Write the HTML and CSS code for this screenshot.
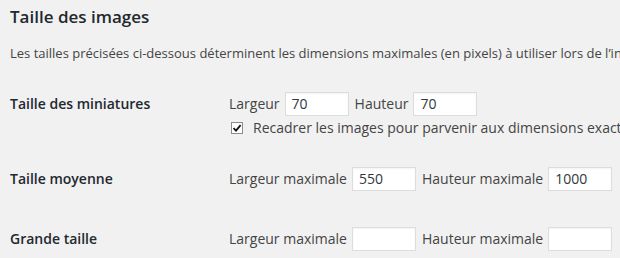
FILE: index.html
```html
<!DOCTYPE html>
<html lang="fr">
<head>
    <meta charset="UTF-8">
    <title>Réglages des médias</title>
    <link rel="stylesheet" href="styles.css">
</head>
<body>
    <div class="wrap">
        <h3 class="title">Taille des images</h3>
        <p class="desc">Les tailles précisées ci-dessous déterminent les dimensions maximales (en pixels) à utiliser lors de l’insertion d’une image dans la bibliothèque de médias.</p>

        <div class="row row-thumb">
            <div class="label">Taille des miniatures</div>
            <div class="field">
                <div class="line">
                    <span class="text">Largeur</span>
                    <input type="text" class="small" value="70">
                    <span class="text">Hauteur</span>
                    <input type="text" class="small" value="70">
                </div>
                <label class="check">
                    <span class="box">
                        <svg width="10" height="10" viewBox="0 0 10 10"><path d="M1.5 5.2 L4 7.6 L8.6 2.2" fill="none" stroke="#111" stroke-width="1.8"/></svg>
                    </span>
                    <span class="text">Recadrer les images pour parvenir aux dimensions exactes</span>
                </label>
            </div>
        </div>

        <div class="row">
            <div class="label">Taille moyenne</div>
            <div class="field">
                <div class="line">
                    <span class="text">Largeur maximale</span>
                    <input type="text" class="small" value="550">
                    <span class="text">Hauteur maximale</span>
                    <input type="text" class="small" value="1000">
                </div>
            </div>
        </div>

        <div class="row">
            <div class="label">Grande taille</div>
            <div class="field">
                <div class="line">
                    <span class="text">Largeur maximale</span>
                    <input type="text" class="small" value="">
                    <span class="text">Hauteur maximale</span>
                    <input type="text" class="small" value="">
                </div>
            </div>
        </div>
    </div>
</body>
</html>
```

FILE: styles.css
```css
body {
    margin: 0;
    background-color: #f1f1f1;
    font-family: "Open Sans", sans-serif;
    color: #444;
    overflow: hidden;
}
.wrap {
    padding: 0 0 0 10px;
    white-space: nowrap;
}
.title {
    font-size: 17px;
    font-weight: 600;
    line-height: 1.3;
    color: #23282d;
    margin: 6px 0 0;
}
.desc {
    font-size: 13px;
    line-height: 1.5;
    margin: 16px 0 0;
}
.row {
    display: flex;
    padding: 17px 0 19px;
}
.row-thumb {
    padding-top: 28px;
    padding-bottom: 14px;
}
.label {
    width: 219px;
    flex-shrink: 0;
    font-size: 14px;
    font-weight: 600;
    line-height: 24px;
    color: #23282d;
}
.line {
    display: flex;
    align-items: center;
    height: 24px;
}
.text {
    font-size: 14px;
    line-height: 24px;
    color: #444;
}
.small {
    box-sizing: border-box;
    width: 64px;
    height: 24px;
    margin: 0 6px 0 5px;
    padding: 0 6px;
    border: 1px solid #ddd;
    box-shadow: inset 0 1px 2px rgba(0, 0, 0, 0.05);
    background-color: #fff;
    font-family: "Open Sans", sans-serif;
    font-size: 14px;
    color: #32373c;
    outline: none;
}
.check {
    display: flex;
    align-items: center;
    margin-top: 3px;
    height: 17px;
}
.check .text {
    line-height: 17px;
}
.box {
    box-sizing: border-box;
    width: 12px;
    height: 12px;
    margin: 1px 10px 0 2px;
    border: 1px solid #8c8c8c;
    background-color: #fff;
    display: flex;
    align-items: center;
    justify-content: center;
}
```
